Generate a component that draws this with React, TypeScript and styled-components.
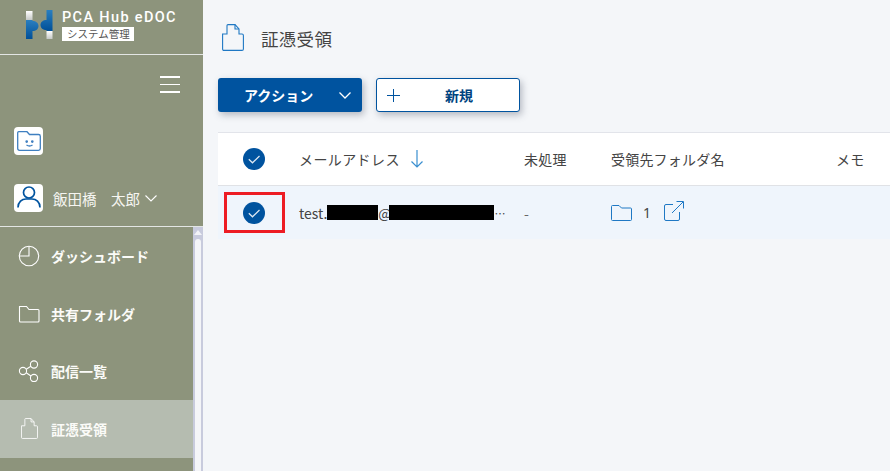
import styled, { createGlobalStyle } from "styled-components";

const GlobalStyle = createGlobalStyle`
  html, body {
    margin: 0;
    padding: 0;
    overflow: hidden;
  }
  body {
    font-family: "Noto Sans CJK JP", "Noto Sans", sans-serif;
    color: #333;
  }
`;

const Page = styled.div`
  display: flex;
  width: 890px;
  height: 471px;
  overflow: hidden;
  background: #f4f6f9;
`;

const Sidebar = styled.aside`
  width: 203px;
  flex: none;
  height: 471px;
  display: flex;
  flex-direction: column;
  background: #8d947c;
  color: #fff;
`;

const Brand = styled.div`
  height: 55px;
  flex: none;
  box-sizing: border-box;
  padding: 10px 0 0 26px;
  display: flex;
  gap: 9px;
  border-bottom: 1px solid #e3e6e4;
`;

const BrandText = styled.div`
  display: flex;
  flex-direction: column;
  align-items: flex-start;
`;

const BrandName = styled.div`
  font-family: "Roboto", sans-serif;
  font-size: 14.5px;
  font-weight: 500;
  line-height: 16px;
  letter-spacing: 1.35px;
  white-space: nowrap;
`;

const BrandTag = styled.div`
  margin-top: 1px;
  width: 72px;
  height: 14px;
  background: #fff;
  color: #555;
  font-size: 10.5px;
  line-height: 13px;
  padding-left: 5px;
  box-sizing: border-box;
  white-space: nowrap;
`;

const Profile = styled.div`
  height: 172px;
  flex: none;
  box-sizing: border-box;
  padding: 21px 14px 0;
  border-bottom: 1px solid #e3e6e4;
  display: flex;
  flex-direction: column;
`;

const MenuButton = styled.div`
  align-self: flex-end;
  margin-right: 9px;
  width: 20px;
  display: flex;
  flex-direction: column;
  gap: 6px;
  span {
    display: block;
    height: 1.5px;
    background: #fff;
  }
`;

const Tile = styled.div`
  width: 29px;
  height: 28px;
  border-radius: 4px;
  background: #fff;
  display: flex;
  align-items: center;
  justify-content: center;
`;

const FolderTile = styled(Tile)`
  margin-top: 34.5px;
`;

const UserRow = styled.div`
  margin-top: 29px;
  display: flex;
  align-items: center;
`;

const UserName = styled.span`
  margin-left: 10px;
  font-size: 14.5px;
  white-space: pre;
  color: #f6f6f2;
`;

const UserCaret = styled.svg`
  margin-left: 5px;
  width: 12px;
  height: 7px;
`;

const NavArea = styled.div`
  flex: 1;
  display: flex;
  min-height: 0;
`;

const NavList = styled.nav`
  flex: 1;
  padding-top: 0.5px;
  overflow: hidden;
`;

const NavItem = styled.div<{ $active?: boolean }>`
  height: 57.5px;
  box-sizing: border-box;
  padding-left: 18px;
  display: flex;
  align-items: center;
  gap: 11px;
  background: ${({ $active }) => ($active ? "#b5bcb0" : "transparent")};
  font-size: 14px;
  font-weight: 700;
  color: #fbfbf8;
`;

const NavIcon = styled.span`
  width: 22px;
  height: 22px;
  flex: none;
  display: flex;
  align-items: center;
  justify-content: center;
`;

const ScrollTrack = styled.div`
  width: 10px;
  flex: none;
  background: #c8cbdd;
  display: flex;
  flex-direction: column;
  align-items: center;
`;

const ScrollArrow = styled.div`
  height: 12px;
  width: 10px;
  flex: none;
  position: relative;
  &::after {
    content: "";
    position: absolute;
    left: 1px;
    top: 3px;
    border-left: 4px solid transparent;
    border-right: 4px solid transparent;
    border-bottom: 5px solid #f2f3f7;
  }
`;

const ScrollThumb = styled.div`
  width: 6px;
  flex: 1;
  background: #f4f5f8;
  border-radius: 3px 3px 0 0;
`;

const Main = styled.main`
  flex: 1;
  min-width: 0;
  display: flex;
  flex-direction: column;
`;

const TitleRow = styled.div`
  height: 78px;
  flex: none;
  box-sizing: border-box;
  padding: 24px 0 0 19px;
  display: flex;
  align-items: flex-start;
  gap: 17px;
`;

const Title = styled.h1`
  margin: -1px 0 0;
  font-size: 17.5px;
  font-weight: 400;
  line-height: 32px;
  color: #444;
  letter-spacing: 0.3px;
`;

const Toolbar = styled.div`
  height: 54px;
  flex: none;
  padding-left: 15px;
  display: flex;
  align-items: flex-start;
  gap: 14px;
`;

const ActionButton = styled.button`
  width: 144px;
  height: 34px;
  padding: 0 11px 0 26px;
  border: 0;
  border-radius: 3px;
  background: #00539f;
  color: #fff;
  font: 700 14px "Noto Sans CJK JP", sans-serif;
  display: flex;
  align-items: center;
  justify-content: space-between;
  box-shadow: 2px 3px 7px rgba(60, 70, 90, 0.35);
`;

const NewButton = styled.button`
  width: 144px;
  height: 34px;
  padding: 0 0 0 10px;
  box-sizing: border-box;
  border: 1px solid #00539f;
  border-radius: 3px;
  background: #fff;
  color: #00437f;
  font: 700 14px "Noto Sans CJK JP", sans-serif;
  display: flex;
  align-items: center;
  box-shadow: 2px 3px 7px rgba(60, 70, 90, 0.35);
`;

const NewLabel = styled.span`
  margin-left: 45px;
`;

const Table = styled.div`
  margin-left: 15px;
  border-top: 1px solid #e2e4ea;
`;

const Row = styled.div<{ $body?: boolean }>`
  display: grid;
  grid-template-columns: 72px 234px 87px 225px 1fr;
  align-items: center;
  box-sizing: border-box;
  height: 53px;
  background: ${({ $body }) => ($body ? "#eff5fc" : "#fff")};
  border-bottom: ${({ $body }) => ($body ? "0" : "1px solid #e0e2e6")};
  font-size: 14px;
  color: #444;
`;

const CheckCell = styled.div`
  display: flex;
  justify-content: center;
  position: relative;
`;

const Check = styled.svg`
  width: 22px;
  height: 22px;
`;

const Highlight = styled.div`
  position: absolute;
  left: 6px;
  top: -10px;
  width: 61px;
  height: 41px;
  box-sizing: border-box;
  border: 3px solid #ed1c24;
`;

const HeadCell = styled.div`
  display: flex;
  align-items: center;
  gap: 11px;
  white-space: nowrap;
  letter-spacing: 0.4px;
`;

const EmailHead = styled(HeadCell)`
  margin-left: 9px;
`;

const PlainHead = styled(HeadCell)`
  letter-spacing: 0.2px;
`;

const EmailCell = styled.div`
  display: flex;
  align-items: center;
  white-space: pre;
  margin-left: 9px;
`;

const Redaction = styled.span<{ $width: number }>`
  display: inline-block;
  width: ${({ $width }) => $width}px;
  height: 15px;
  background: #000;
`;

const DomainRedaction = styled(Redaction)`
  margin-left: -3px;
`;

const Dots = styled.span`
  margin-left: 1px;
  font-size: 11px;
`;

const DashCell = styled.div`
  color: #666;
`;

const FolderCell = styled.div`
  display: flex;
  align-items: center;
  gap: 11px;
  font-family: "Noto Sans", sans-serif;
`;

const OpenIcon = styled.svg`
  margin-left: 2px;
  margin-top: -4px;
`;

function CheckIcon() {
  return (
    <Check viewBox="0 0 22 22">
      <circle cx="11" cy="11" r="11" fill="#00539f" />
      <path d="M5.8 11.2 L9.5 14.8 L16.5 8" fill="none" stroke="#dfe9f3" strokeWidth="1.2" />
    </Check>
  );
}

function Logo() {
  return (
    <svg width="27" height="29" viewBox="0 0 27 29">
      <defs>
        <linearGradient id="logoBlue" x1="0" y1="0" x2="0" y2="1">
          <stop offset="0" stopColor="#2a7fc0" />
          <stop offset="1" stopColor="#004f98" />
        </linearGradient>
        <linearGradient id="logoWhite" x1="0" y1="0" x2="0" y2="1">
          <stop offset="0" stopColor="#ffffff" />
          <stop offset="1" stopColor="#c5c8c6" />
        </linearGradient>
      </defs>
      <rect x="0" y="1" width="6.5" height="9" fill="url(#logoWhite)" />
      <path d="M0 10 H6.5 V11 C10 11 12.5 13 12.5 16 C12.5 19 10 21 6.5 21 V29 H0 Z" fill="url(#logoBlue)" />
      <path d="M20.5 0 H26.5 V21 H20.5 V20 C17 20 14.5 18 14.5 15 C14.5 12 17 10 20.5 10 Z" fill="url(#logoBlue)" />
      <path d="M20.5 21 H26.5 V29 H20.5 Z" fill="url(#logoWhite)" />
    </svg>
  );
}

function NavDashboardIcon() {
  return (
    <svg width="22" height="22" viewBox="0 0 22 22" fill="none" stroke="#fff" strokeWidth="1.1">
      <circle cx="11" cy="11" r="9.7" />
      <path d="M11 1.3 V11 H1.3" />
    </svg>
  );
}

function NavFolderIcon() {
  return (
    <svg width="22" height="22" viewBox="0 0 22 22" fill="none" stroke="#fff" strokeWidth="1.1">
      <path d="M1.5 3.5 H8.5 L11 6.5 H20 Q21 6.5 21 7.5 V18 Q21 19 20 19 H2.5 Q1.5 19 1.5 18 Z" />
    </svg>
  );
}

function NavShareIcon() {
  return (
    <svg width="22" height="22" viewBox="0 0 22 22" fill="none" stroke="#fff" strokeWidth="1.1">
      <circle cx="5" cy="11" r="3.6" />
      <circle cx="16" cy="4.5" r="3.6" />
      <circle cx="16" cy="18" r="3.6" />
      <path d="M8.2 9.2 L12.9 6.3 M8.2 12.8 L12.9 16" />
    </svg>
  );
}

function ReceiptIcon({ stroke, width, height }: { stroke: string; width: number; height: number }) {
  return (
    <svg width={width} height={height} viewBox="0 0 22 27" fill="none" stroke={stroke} strokeWidth="1.1">
      <path d="M0.6 10 H5 V1.6 Q5 0.6 6 0.6 H13 L17 5 V10 H20 Q21.4 10 21.4 11.4 V25 Q21.4 26.4 20 26.4 H2 Q0.6 26.4 0.6 25 Z" />
      <path d="M13 0.6 V5 H17" />
    </svg>
  );
}

export default function App() {
  return (
    <>
      <GlobalStyle />
      <Page>
        <Sidebar>
          <Brand>
            <Logo />
            <BrandText>
              <BrandName>PCA Hub eDOC</BrandName>
              <BrandTag>システム管理</BrandTag>
            </BrandText>
          </Brand>
          <Profile>
            <MenuButton>
              <span />
              <span />
              <span />
            </MenuButton>
            <FolderTile>
              <svg width="24" height="20" viewBox="0 0 24 20" fill="none" stroke="#3f7fc0" strokeWidth="1.3">
                <path d="M1.7 0.7 H10 L12.5 3.5 H21.5 Q23.3 3.5 23.3 5.3 V17.5 Q23.3 19.3 21.5 19.3 H2.5 Q0.7 19.3 0.7 17.5 V1.7 Q0.7 0.7 1.7 0.7 Z" />
                <circle cx="9.7" cy="10.6" r="0.7" fill="#3f7fc0" />
                <circle cx="15.3" cy="10.6" r="0.7" fill="#3f7fc0" />
                <path d="M9.5 14 Q12.5 16 15.5 14" />
              </svg>
            </FolderTile>
            <UserRow>
              <Tile>
                <svg width="26" height="26" viewBox="0 0 26 26" fill="none" stroke="#00539f" strokeWidth="1.7">
                  <circle cx="13" cy="7.5" r="5.5" />
                  <path d="M2 22.5 C2 17 6 14 10 14 H16 C20 14 24 17 24 22.5" />
                </svg>
              </Tile>
              <UserName>飯田橋　太郎</UserName>
              <UserCaret viewBox="0 0 12 7" fill="none" stroke="#fff" strokeWidth="1.1">
                <path d="M0.5 0.5 L6 6 L11.5 0.5" />
              </UserCaret>
            </UserRow>
          </Profile>
          <NavArea>
            <NavList>
              <NavItem>
                <NavIcon>
                  <NavDashboardIcon />
                </NavIcon>
                ダッシュボード
              </NavItem>
              <NavItem>
                <NavIcon>
                  <NavFolderIcon />
                </NavIcon>
                共有フォルダ
              </NavItem>
              <NavItem>
                <NavIcon>
                  <NavShareIcon />
                </NavIcon>
                配信一覧
              </NavItem>
              <NavItem $active>
                <NavIcon>
                  <ReceiptIcon stroke="#fff" width={17} height={21} />
                </NavIcon>
                証憑受領
              </NavItem>
            </NavList>
            <ScrollTrack>
              <ScrollArrow />
              <ScrollThumb />
            </ScrollTrack>
          </NavArea>
        </Sidebar>
        <Main>
          <TitleRow>
            <ReceiptIcon stroke="#1f78c4" width={22} height={27} />
            <Title>証憑受領</Title>
          </TitleRow>
          <Toolbar>
            <ActionButton>
              アクション
              <svg width="12" height="7" viewBox="0 0 12 7" fill="none" stroke="#fff" strokeWidth="1.3">
                <path d="M0.5 0.5 L6 6 L11.5 0.5" />
              </svg>
            </ActionButton>
            <NewButton>
              <svg width="13" height="13" viewBox="0 0 13 13" fill="none" stroke="#00539f" strokeWidth="1">
                <path d="M6.5 0 V13 M0 6.5 H13" />
              </svg>
              <NewLabel>新規</NewLabel>
            </NewButton>
          </Toolbar>
          <Table>
            <Row>
              <CheckCell>
                <CheckIcon />
              </CheckCell>
              <EmailHead>
                メールアドレス
                <svg width="12" height="18" viewBox="0 0 12 18" fill="none" stroke="#3a8fd0" strokeWidth="1.2">
                  <path d="M6 0 V17 M0.5 11.5 L6 17 L11.5 11.5" />
                </svg>
              </EmailHead>
              <PlainHead>未処理</PlainHead>
              <PlainHead>受領先フォルダ名</PlainHead>
              <PlainHead>メモ</PlainHead>
            </Row>
            <Row $body>
              <CheckCell>
                <CheckIcon />
                <Highlight />
              </CheckCell>
              <EmailCell>
                test.
                <Redaction $width={51} />@
                <DomainRedaction $width={105} />
                <Dots>⋯</Dots>
              </EmailCell>
              <DashCell>-</DashCell>
              <FolderCell>
                <svg width="21" height="16" viewBox="0 0 21 16" fill="none" stroke="#1f78c4" strokeWidth="1">
                  <path d="M0.5 1.5 Q0.5 0.5 1.5 0.5 H8 L10.5 3 H19.5 Q20.5 3 20.5 4 V14.5 Q20.5 15.5 19.5 15.5 H1.5 Q0.5 15.5 0.5 14.5 Z" />
                </svg>
                1
                <OpenIcon width="20" height="20" viewBox="0 0 20 20" fill="none" stroke="#1f78c4" strokeWidth="1">
                  <path d="M9 3.5 H2 Q0.5 3.5 0.5 5 V18 Q0.5 19.5 2 19.5 H14 Q15.5 19.5 15.5 18 V11" />
                  <path d="M8 12 L19 1 M12.5 0.5 H19.5 V7.5" />
                </OpenIcon>
              </FolderCell>
            </Row>
          </Table>
        </Main>
      </Page>
    </>
  );
}
